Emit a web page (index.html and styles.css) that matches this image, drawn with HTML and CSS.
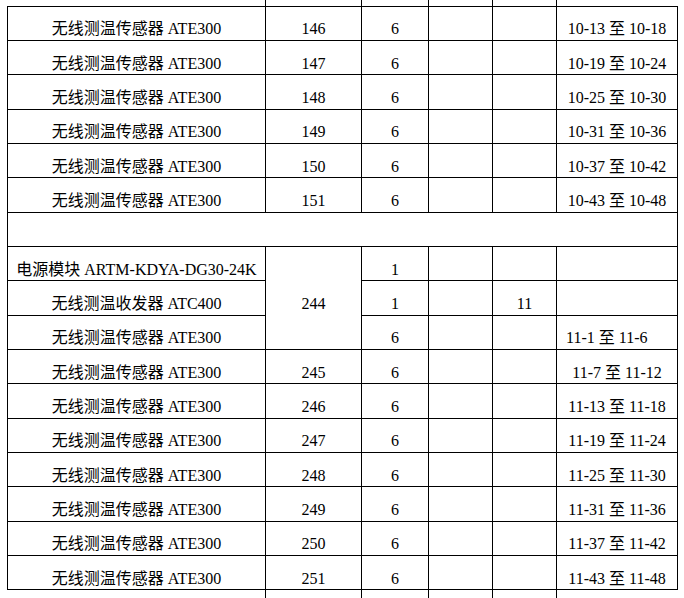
FILE: index.html
```html
<!DOCTYPE html>
<html lang="zh-CN">
<head>
<meta charset="utf-8">
<title>设备清单</title>
<link rel="stylesheet" href="styles.css">
</head>
<body>
<table class="sheet">
  <colgroup>
    <col class="c-name"><col class="c-no"><col class="c-qty"><col class="c-a"><col class="c-b"><col class="c-range">
  </colgroup>
  <tbody>
    <tr class="stub stub-top"><td></td><td></td><td></td><td></td><td></td><td></td></tr>
    <tr><td>无线测温传感器 ATE300</td><td>146</td><td>6</td><td></td><td></td><td>10-13 至 10-18</td></tr>
    <tr><td>无线测温传感器 ATE300</td><td>147</td><td>6</td><td></td><td></td><td>10-19 至 10-24</td></tr>
    <tr><td>无线测温传感器 ATE300</td><td>148</td><td>6</td><td></td><td></td><td>10-25 至 10-30</td></tr>
    <tr><td>无线测温传感器 ATE300</td><td>149</td><td>6</td><td></td><td></td><td>10-31 至 10-36</td></tr>
    <tr><td>无线测温传感器 ATE300</td><td>150</td><td>6</td><td></td><td></td><td>10-37 至 10-42</td></tr>
    <tr><td>无线测温传感器 ATE300</td><td>151</td><td>6</td><td></td><td></td><td>10-43 至 10-48</td></tr>
    <tr class="blank"><td colspan="6"></td></tr>
    <tr><td>电源模块 ARTM-KDYA-DG30-24K</td><td rowspan="3">244</td><td>1</td><td></td><td></td><td></td></tr>
    <tr><td>无线测温收发器 ATC400</td><td>1</td><td></td><td>11</td><td></td></tr>
    <tr><td>无线测温传感器 ATE300</td><td>6</td><td></td><td></td><td class="left">11-1 至 11-6</td></tr>
    <tr><td>无线测温传感器 ATE300</td><td>245</td><td>6</td><td></td><td></td><td>11-7 至 11-12</td></tr>
    <tr><td>无线测温传感器 ATE300</td><td>246</td><td>6</td><td></td><td></td><td>11-13 至 11-18</td></tr>
    <tr><td>无线测温传感器 ATE300</td><td>247</td><td>6</td><td></td><td></td><td>11-19 至 11-24</td></tr>
    <tr><td>无线测温传感器 ATE300</td><td>248</td><td>6</td><td></td><td></td><td>11-25 至 11-30</td></tr>
    <tr><td>无线测温传感器 ATE300</td><td>249</td><td>6</td><td></td><td></td><td>11-31 至 11-36</td></tr>
    <tr><td>无线测温传感器 ATE300</td><td>250</td><td>6</td><td></td><td></td><td>11-37 至 11-42</td></tr>
    <tr><td>无线测温传感器 ATE300</td><td>251</td><td>6</td><td></td><td></td><td>11-43 至 11-48</td></tr>
    <tr class="stub stub-bottom"><td></td><td></td><td></td><td></td><td></td><td></td></tr>
  </tbody>
</table>
</body>
</html>
```

FILE: styles.css
```css
html, body {
  margin: 0;
  padding: 0;
  background: #fff;
}

body {
  font-family: "Liberation Serif", "Noto Sans CJK SC", serif;
  font-size: 16px;
  color: #000;
}

.sheet {
  margin-left: 7px;
  width: 670px;
  table-layout: fixed;
  border-collapse: collapse;
}

.c-name { width: 258px; }
.c-no { width: 96px; }
.c-qty { width: 67px; }
.c-a { width: 64px; }
.c-b { width: 64px; }
.c-range { width: 121px; }

.sheet td {
  border: 1px solid #000;
  height: 34.35px;
  box-sizing: border-box;
  padding: 12px 0 0 0;
  line-height: 20px;
  text-align: center;
  vertical-align: middle;
  white-space: nowrap;
  overflow: hidden;
}

.sheet td.left {
  text-align: left;
  padding-left: 9px;
}

.sheet tr.stub td {
  padding: 0;
  line-height: 0;
  font-size: 0;
  border-top: none;
  border-bottom: none;
}

.sheet tr.stub td:first-child { border-left: none; }
.sheet tr.stub td:last-child { border-right: none; }

.sheet tr.stub-top td { height: 6px; }
.sheet tr.stub-bottom td { height: 8px; }
```
